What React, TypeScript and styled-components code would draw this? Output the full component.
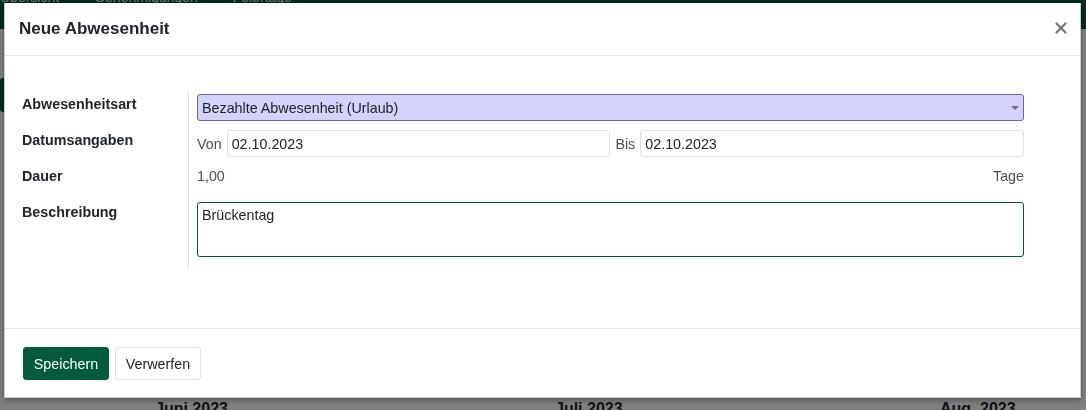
import { createGlobalStyle } from "styled-components";
import styled from "styled-components";

const GlobalStyle = createGlobalStyle`
  html, body {
    margin: 0;
    padding: 0;
    width: 1086px;
    height: 410px;
    overflow: hidden;
    background: #ffffff;
    font-family: "Liberation Sans", Arial, sans-serif;
    font-size: 14.3px;
    color: #212529;
  }
  * {
    box-sizing: border-box;
  }
`;

/* ---------- page behind the dialog ---------- */

const Page = styled.div`
  width: 1086px;
  height: 410px;
  display: flex;
  flex-direction: column;
  background: #ffffff;
`;

const NavBar = styled.div`
  height: 29px;
  background: #005a3c;
  display: flex;
  align-items: flex-end;
  gap: 35px;
  padding: 0 0 26px 0;
  color: #e9ecef;
  font-size: 14px;
  line-height: 12px;
`;

const NavItem = styled.span`
  white-space: nowrap;
`;

const ControlPanel = styled.div`
  height: 83px;
  padding-top: 49px;
  display: flex;
  align-items: flex-start;
`;

const NewButton = styled.div`
  width: 60px;
  height: 34px;
  background: #005a3c;
  border-radius: 3px;
`;

const CalendarArea = styled.div`
  flex: 1;
  display: flex;
  flex-direction: column;
  justify-content: flex-end;
`;

const MonthRow = styled.div`
  display: grid;
  grid-template-columns: 155px 400px 385px 1fr;
  height: 10px;
  align-items: start;
  font-weight: bold;
  font-size: 16px;
  line-height: 17px;
  color: #212529;
`;

const MonthName = styled.span`
  white-space: nowrap;
`;

/* ---------- dialog ---------- */

const Backdrop = styled.div`
  position: fixed;
  inset: 0;
  background: rgba(0, 0, 0, 0.5);
  padding: 3px 5px 0 4px;
`;

const Dialog = styled.div`
  width: 1077px;
  background: #ffffff;
  border: 1px solid rgba(0, 0, 0, 0.2);
  border-top: 0;
  box-shadow: 0 2px 6px rgba(0, 0, 0, 0.35);
  display: flex;
  flex-direction: column;
`;

const Header = styled.div`
  height: 53px;
  display: flex;
  align-items: center;
  justify-content: space-between;
  padding: 0 9px 0 14px;
  border-bottom: 1px solid #dee2e6;
`;

const Title = styled.h4`
  margin: 0;
  font-size: 17px;
  font-weight: bold;
  color: #212529;
`;

const CloseButton = styled.button`
  border: 0;
  background: transparent;
  padding: 0;
  width: 20px;
  height: 20px;
  margin-top: -3px;
  display: flex;
  align-items: center;
  justify-content: center;
  cursor: pointer;
`;

const Body = styled.div`
  height: 273px;
  padding: 37px 56px 0 17px;
  border-bottom: 1px solid #dee2e6;
`;

const FormGrid = styled.div`
  display: grid;
  grid-template-columns: 166px 1fr;
`;

const Label = styled.div<{ $offset?: number }>`
  font-weight: bold;
  line-height: 20px;
  padding-top: ${(p) => p.$offset ?? 0}px;
  white-space: nowrap;
`;

const FieldCell = styled.div<{ $top?: number; $bottom: number }>`
  border-left: 1px solid #dee2e6;
  padding: ${(p) => p.$top ?? 0}px 0 ${(p) => p.$bottom}px 8px;
`;

const SelectBox = styled.div`
  position: relative;
  height: 27px;
  padding: 0 24px 0 4px;
  display: flex;
  align-items: center;
  background: #d3d3fd;
  border: 1px solid #6d66a8;
  border-radius: 3px;
  color: #212529;
`;

const Caret = styled.span`
  position: absolute;
  right: 4px;
  top: 11px;
  width: 0;
  height: 0;
  border-left: 4px solid transparent;
  border-right: 4px solid transparent;
  border-top: 4px solid #6c757d;
`;

const DateRow = styled.div`
  display: flex;
  align-items: center;
  gap: 5px;
`;

const Muted = styled.span`
  color: #495057;
  line-height: 20px;
`;

const DateInput = styled.div`
  flex: 1;
  height: 27px;
  display: flex;
  align-items: center;
  padding: 0 4px;
  border: 1px solid #dee2e6;
  border-radius: 3px;
  color: #212529;
`;

const DurationRow = styled.div`
  display: flex;
  justify-content: space-between;
  line-height: 20px;
  color: #495057;
`;

const TextArea = styled.div`
  height: 55px;
  padding: 2px 4px;
  line-height: 20px;
  border: 1px solid #00543a;
  border-radius: 3px;
  color: #212529;
`;

const Footer = styled.div`
  height: 68px;
  padding: 18px 18px 0;
  display: flex;
  align-items: flex-start;
  gap: 6px;
`;

const Button = styled.button<{ $primary?: boolean }>`
  height: 33px;
  width: 86px;
  font-family: inherit;
  font-size: 14.3px;
  border-radius: 3px;
  cursor: pointer;
  border: 1px solid ${(p) => (p.$primary ? "#005a3c" : "#dee2e6")};
  background: ${(p) => (p.$primary ? "#005a3c" : "#ffffff")};
  color: ${(p) => (p.$primary ? "#ffffff" : "#212529")};
`;

export default function App() {
  return (
    <>
      <GlobalStyle />
      <Page>
        <NavBar>
          <NavItem>Übersicht</NavItem>
          <NavItem>Genehmigungen</NavItem>
          <NavItem>Feiertage</NavItem>
        </NavBar>
        <ControlPanel>
          <NewButton />
        </ControlPanel>
        <CalendarArea>
          <MonthRow>
            <span />
            <MonthName>Juni 2023</MonthName>
            <MonthName>Juli 2023</MonthName>
            <MonthName>Aug. 2023</MonthName>
          </MonthRow>
        </CalendarArea>
      </Page>

      <Backdrop>
        <Dialog>
          <Header>
            <Title>Neue Abwesenheit</Title>
            <CloseButton aria-label="Schließen">
              <svg width="12" height="12" viewBox="0 0 12 12">
                <path
                  d="M1.5 1.5 L10.5 10.5 M10.5 1.5 L1.5 10.5"
                  stroke="#6f7378"
                  strokeWidth="2.2"
                  strokeLinecap="round"
                />
              </svg>
            </CloseButton>
          </Header>

          <Body>
            <FormGrid>
              <Label $offset={1}>Abwesenheitsart</Label>
              <FieldCell $top={1} $bottom={9}>
                <SelectBox>
                  Bezahlte Abwesenheit (Urlaub)
                  <Caret />
                </SelectBox>
              </FieldCell>

              <Label>Datumsangaben</Label>
              <FieldCell $bottom={9}>
                <DateRow>
                  <Muted>Von</Muted>
                  <DateInput>02.10.2023</DateInput>
                  <Muted>Bis</Muted>
                  <DateInput>02.10.2023</DateInput>
                </DateRow>
              </FieldCell>

              <Label>Dauer</Label>
              <FieldCell $bottom={16}>
                <DurationRow>
                  <span>1,00</span>
                  <span>Tage</span>
                </DurationRow>
              </FieldCell>

              <Label>Beschreibung</Label>
              <FieldCell $bottom={11}>
                <TextArea>Brückentag</TextArea>
              </FieldCell>
            </FormGrid>
          </Body>

          <Footer>
            <Button $primary>Speichern</Button>
            <Button>Verwerfen</Button>
          </Footer>
        </Dialog>
      </Backdrop>
    </>
  );
}
